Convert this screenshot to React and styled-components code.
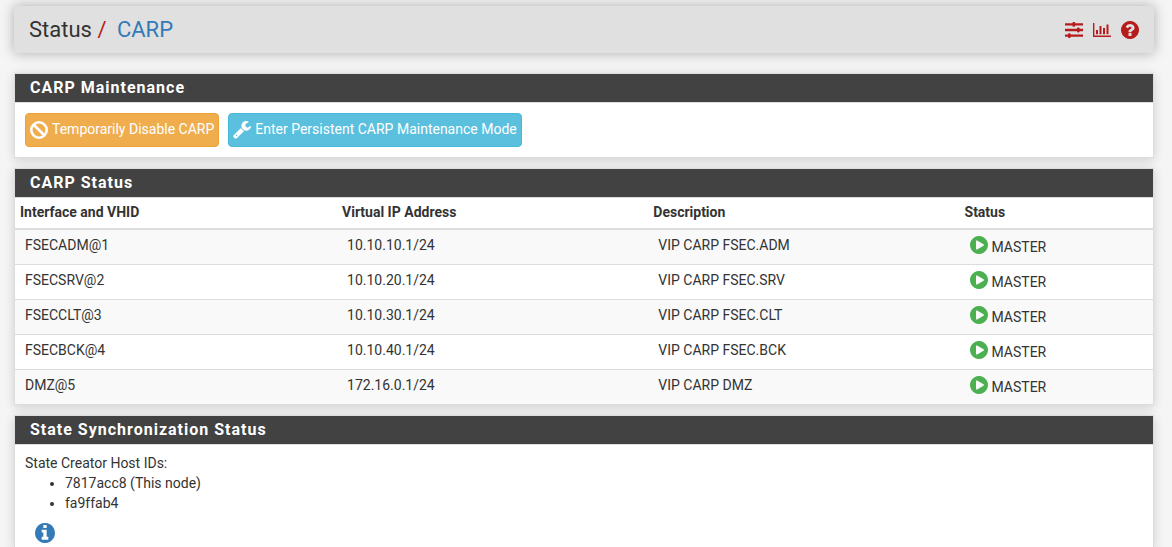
import React from "react";
import styled, { createGlobalStyle } from "styled-components";

const hosts = ["7817acc8 (This node)", "fa9ffab4"];

const vips = [
  { vhid: "FSECADM@1", address: "10.10.10.1/24", descr: "VIP CARP FSEC.ADM" },
  { vhid: "FSECSRV@2", address: "10.10.20.1/24", descr: "VIP CARP FSEC.SRV" },
  { vhid: "FSECCLT@3", address: "10.10.30.1/24", descr: "VIP CARP FSEC.CLT" },
  { vhid: "FSECBCK@4", address: "10.10.40.1/24", descr: "VIP CARP FSEC.BCK" },
  { vhid: "DMZ@5", address: "172.16.0.1/24", descr: "VIP CARP DMZ" },
];

function SlidersIcon() {
  return (
    <Icon viewBox="0 0 18 18" aria-hidden="true">
      <path d="M0 2.200h18v2.400H0zM0 7.800h18v2.400H0zM0 13.400h18v2.400H0z" />
      <rect x="7.500" y="1" width="2.600" height="4.800" rx="0.800" />
      <rect x="12" y="6.600" width="2.600" height="4.800" rx="0.800" />
      <rect x="3" y="12.200" width="2.600" height="4.800" rx="0.800" />
    </Icon>
  );
}

function ChartIcon() {
  return (
    <Icon viewBox="0 0 18 18" aria-hidden="true">
      <path d="M0 2h1.400v12.600H18V16H0zM3 9h2v4.200H3zM6.500 5h2v8.200h-2zM10 7h2v6.200h-2zM13.500 3.500h2v9.700h-2z" />
    </Icon>
  );
}

function HelpIcon() {
  return (
    <Icon viewBox="0 0 1536 1536" aria-hidden="true">
      <path d="M896 1248v-192q0-14-9-23t-23-9H672q-14 0-23 9t-9 23v192q0 14 9 23t23 9h192q14 0 23-9t9-23zm256-672q0-88-55.500-163T958 297t-170-41q-243 0-371 213-15 24 8 42l132 100q7 6 19 6 16 0 25-12 53-68 86-92 34-24 86-24 48 0 85.500 26t37.500 59q0 38-20 61t-68 45q-63 28-115.500 86.500T640 892v36q0 14 9 23t23 9h192q14 0 23-9t9-23q0-19 21.500-49.500T972 829q32-18 49-28.500t46-35 44.500-48 28-60.500 12.500-81zm384 192q0 209-103 385.500T1153.500 1433 768 1536t-385.500-103T103 1153.500 0 768t103-385.500T382.500 103 768 0t385.500 103T1433 382.500 1536 768z" />
    </Icon>
  );
}

function BanIcon() {
  return (
    <Icon viewBox="0 0 18 18" aria-hidden="true">
      <circle cx="9" cy="9" r="7.700" fill="none" stroke="currentColor" strokeWidth="2.600" />
      <path d="M3.500 3.500l11 11" stroke="currentColor" strokeWidth="2.600" />
    </Icon>
  );
}

function WrenchIcon() {
  return (
    <Icon viewBox="0 0 1664 1664" aria-hidden="true">
      <path d="M384 1344q0-26-19-45t-45-19-45 19-19 45 19 45 45 19 45-19 19-45zm644-420l-682 682q-37 37-90 37-52 0-91-37L59 1498q-38-36-38-90 0-53 38-91l681-681q39 98 114.500 173.500T1028 924zm634-435q0 39-23 106-47 134-164.500 217.500T1216 896q-185 0-316.500-131.500T768 448t131.500-316.500T1216 0q58 0 121.500 16.500T1445 63q16 11 16 28t-16 28l-293 169v224l193 107q5-3 79-48.500t135.500-81T1630 454q15 0 23.500 10t8.500 25z" />
    </Icon>
  );
}

function PlayIcon() {
  return (
    <Icon viewBox="0 0 1536 1536" aria-hidden="true">
      <path d="M768 0q209 0 385.500 103T1433 382.500 1536 768t-103 385.500-279.500 279.500T768 1536t-385.500-103T103 1153.500 0 768t103-385.500T382.500 103 768 0zm384 823q32-18 32-55t-32-55L608 393q-31-19-64-1-32 19-32 56v640q0 37 32 56 16 8 32 8 17 0 32-9z" />
    </Icon>
  );
}

function InfoIcon() {
  return (
    <Icon viewBox="0 0 1536 1536" aria-hidden="true">
      <path d="M1024 1248v-160q0-14-9-23t-23-9h-96V544q0-14-9-23t-23-9H544q-14 0-23 9t-9 23v160q0 14 9 23t23 9h96v320h-96q-14 0-23 9t-9 23v160q0 14 9 23t23 9h448q14 0 23-9t9-23zM896 352V192q0-14-9-23t-23-9H672q-14 0-23 9t-9 23v160q0 14 9 23t23 9h192q14 0 23-9t9-23zm640 416q0 209-103 385.500T1153.500 1433 768 1536t-385.500-103T103 1153.500 0 768t103-385.500T382.500 103 768 0t385.500 103T1433 382.500 1536 768z" />
    </Icon>
  );
}

function App() {
  return (
    <>
      <GlobalStyle />
      <Page>
        <Header>
          <Title>
            Status <Slash>/</Slash> <a href="#carp">CARP</a>
          </Title>
          <Shortcuts>
            <Shortcut href="#settings" aria-label="Related settings">
              <SlidersIcon />
            </Shortcut>
            <Shortcut href="#status" aria-label="Related status">
              <ChartIcon />
            </Shortcut>
            <Shortcut href="#help" aria-label="Help">
              <HelpIcon />
            </Shortcut>
          </Shortcuts>
        </Header>

        <Panel>
          <PanelTitle>CARP Maintenance</PanelTitle>
          <Actions>
            <Button type="button" $color="#f0ad4e" $border="#eea236">
              <BanIcon />
              <ButtonLabel>Temporarily Disable CARP</ButtonLabel>
            </Button>
            <Button type="button" $color="#5bc0de" $border="#46b8da">
              <WrenchIcon />
              <ButtonLabel>Enter Persistent CARP Maintenance Mode</ButtonLabel>
            </Button>
          </Actions>
        </Panel>

        <Panel>
          <PanelTitle>CARP Status</PanelTitle>
          <Table>
            <colgroup>
              <Col $width="28.300%" />
              <Col $width="27.350%" />
              <Col $width="27.350%" />
              <Col $width="17%" />
            </colgroup>
            <thead>
              <tr>
                <Th>Interface and VHID</Th>
                <Th>Virtual IP Address</Th>
                <Th>Description</Th>
                <Th>Status</Th>
              </tr>
            </thead>
            <tbody>
              {vips.map((vip) => (
                <Row key={vip.vhid}>
                  <Td>{vip.vhid}</Td>
                  <Td>{vip.address}</Td>
                  <Td>{vip.descr}</Td>
                  <Td>
                    <State>
                      <PlayIcon />
                      <span>MASTER</span>
                    </State>
                  </Td>
                </Row>
              ))}
            </tbody>
          </Table>
        </Panel>

        <Panel>
          <PanelTitle>State Synchronization Status</PanelTitle>
          <SyncBody>
            State Creator Host IDs:
            <HostList>
              {hosts.map((host) => (
                <li key={host}>{host}</li>
              ))}
            </HostList>
            <InfoButton type="button" aria-label="More information">
              <InfoIcon />
            </InfoButton>
          </SyncBody>
        </Panel>
      </Page>
    </>
  );
}

export default App;

const GlobalStyle = createGlobalStyle`
  * {
    box-sizing: border-box;
  }
  body {
    margin: 0;
    background: #f5f5f5;
    color: #333;
    font-family: Roboto, "Liberation Sans", sans-serif;
    font-size: 14px;
    line-height: 20px;
  }
  a {
    color: #337ab7;
    text-decoration: none;
  }
`;
const Icon = styled.svg`
  display: block;
  flex: none;
  width: 18px;
  height: 18px;
  fill: currentColor;
`;
const Page = styled.main`
  padding: 6px 18px 0 14px;
`;
const Header = styled.header`
  display: flex;
  align-items: center;
  justify-content: space-between;
  height: 47px;
  margin-bottom: 20px;
  padding: 0 15px;
  background: #e0e0e0;
  box-shadow: 0 0 12px rgba(0, 0, 0, 0.3);
`;
const Title = styled.h1`
  margin: 0;
  font-size: 22px;
  font-weight: 400;
  line-height: 24px;

  a {
    margin-left: 5px;
  }
`;
const Slash = styled.span`
  color: #b71c1c;
`;
const Shortcuts = styled.nav`
  display: flex;
  gap: 10px;
`;
const Shortcut = styled.a`
  && {
    color: #b71c1c;
  }
`;
const Panel = styled.section`
  margin-bottom: 10px;
  background: #fff;
  border: 1px solid #ddd;
  box-shadow: 0 2px 10px rgba(0, 0, 0, 0.16);

  &:last-child {
    margin-bottom: 0;
  }
`;
const PanelTitle = styled.h2`
  margin: 0;
  padding: 4px 15px;
  background: #424242;
  border-bottom: 1px solid #ddd;
  color: #fff;
  font-size: 16px;
  font-weight: 700;
  line-height: 20px;
  letter-spacing: 1px;
`;
const Actions = styled.div`
  display: flex;
  flex-wrap: wrap;
  gap: 9px;
  padding: 10px;
`;
const Button = styled.button`
  display: flex;
  align-items: center;
  gap: 4px;
  height: 34px;
  padding: 0 4px;
  background: ${(props) => props.$color};
  border: 1px solid ${(props) => props.$border};
  border-radius: 4px;
  color: #fff;
  font: inherit;
  cursor: pointer;
`;
const ButtonLabel = styled.span`
  padding-bottom: 2px;
`;
const Table = styled.table`
  width: 100%;
  table-layout: fixed;
  border-collapse: separate;
  border-spacing: 0;
`;
const Col = styled.col`
  width: ${(props) => props.$width};
`;
const Th = styled.th`
  padding: 4px 5px 6px;
  border-bottom: 2px solid #ddd;
  font-weight: 700;
  text-align: left;
`;
const Td = styled.td`
  padding: 5px 10px 8px;
  border-bottom: 1px solid #ddd;
  vertical-align: top;
`;
const Row = styled.tr`
  &:nth-child(odd) {
    background: #f9f9f9;
  }
  &:last-child td {
    border-bottom: none;
  }
`;
const State = styled.div`
  display: flex;
  gap: 4px;
  padding-top: 1px;

  svg {
    color: #4caf50;
  }
  span {
    padding-top: 2px;
    line-height: 18px;
  }
`;
const SyncBody = styled.div`
  padding: 8px 10px 4px;
`;
const HostList = styled.ul`
  margin: 0 0 10px;
  padding-left: 40px;
`;
const InfoButton = styled.button`
  display: block;
  margin-left: 10px;
  padding: 0;
  background: none;
  border: none;
  color: #337ab7;
  cursor: pointer;

  svg {
    width: 20px;
    height: 20px;
  }
`;
